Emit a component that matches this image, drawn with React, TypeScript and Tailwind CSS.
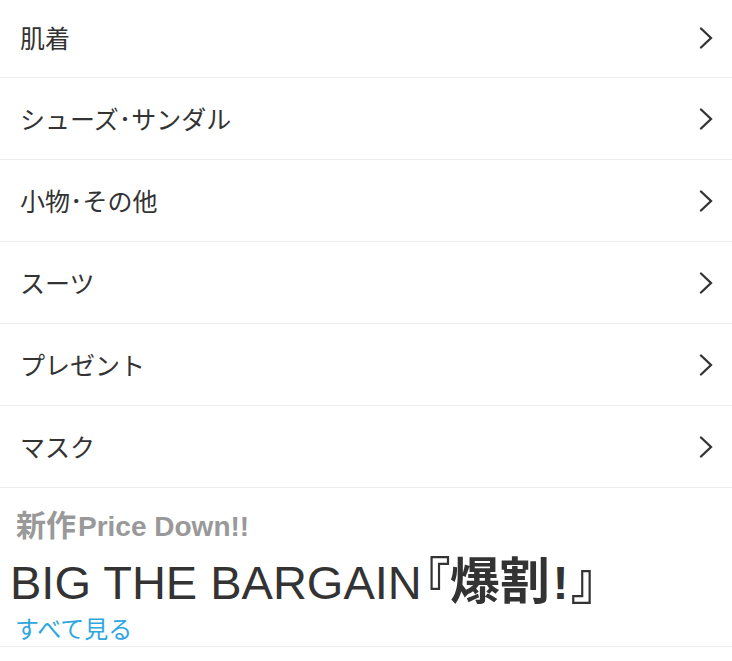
const categories = ["肌着", "シューズ･サンダル", "小物･その他", "スーツ", "プレゼント", "マスク"];

const font = { fontFamily: '"Liberation Sans", "Noto Sans CJK JP", sans-serif' };
const jp = { fontFamily: '"Noto Sans CJK JP", sans-serif' };

function Chevron() {
  return (
    <svg width="14" height="22" viewBox="0 0 14 22" fill="none" className="text-[#333]">
      <polyline points="2,1.5 12,11 2,20.5" stroke="currentColor" strokeWidth="2.3" strokeLinecap="round" strokeLinejoin="miter" />
    </svg>
  );
}

export default function App() {
  return (
    <div className="w-[732px] bg-white text-[#333]" style={font}>
      <ul>
        {categories.map((name, i) => (
          <li
            key={name}
            className={`flex items-center justify-between border-b border-[#eeeeee] pl-5 pr-[19px] ${
              i === 0 ? "h-[78px] pb-[2px]" : "h-[82px]"
            }`}
          >
            <span className="text-[25px] leading-none" style={jp}>
              {name}
            </span>
            <Chevron />
          </li>
        ))}
      </ul>
      <section className="border-b border-[#eeeeee] pb-[7px] pt-[20px]">
        <p className="flex h-[30px] items-baseline pl-4 text-[28px] font-bold leading-[30px] text-[#999]">
          <span className="mr-[2px] text-[30px]" style={jp}>
            新作
          </span>
          <span>Price Down!!</span>
        </p>
        <h2 className="mt-[15px] flex h-[48px] items-baseline pl-[10px] text-[47px] leading-[48px]">
          <span>BIG THE BARGAIN</span>
          <span className="ml-[3px] text-[50px] font-bold" style={{ ...jp, fontFeatureSettings: '"palt"' }}>
            『爆割
          </span>
          <span className="mx-[3px] font-semibold">!</span>
          <span className="text-[50px] font-bold" style={{ ...jp, fontFeatureSettings: '"palt"' }}>
            』
          </span>
        </h2>
        <a className="mt-[15px] block h-[23px] pl-[15px] text-[24px] leading-[23px] text-[#2ea7e0]" style={jp}>
          すべて見る
        </a>
      </section>
    </div>
  );
}
